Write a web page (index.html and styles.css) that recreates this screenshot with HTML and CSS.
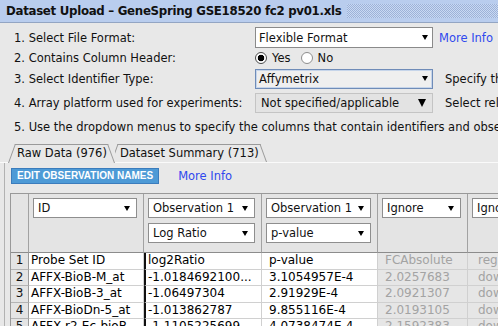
FILE: index.html
```html
<!DOCTYPE html>
<html lang="en">
<head>
    <meta charset="UTF-8">
    <meta name="viewport" content="width=device-width, initial-scale=1.0">
    <title>Dataset Upload</title>
    <link rel="stylesheet" href="styles.css">
</head>
<body>
    <div class="titlebar">
        <span class="title">Dataset Upload &ndash; GeneSpring GSE18520 fc2 pv01.xls</span>
        <span class="grip"></span>
    </div>

    <div class="steps">
        <span>1. Select File Format:</span>
        <div class="combo"><span>Flexible Format</span><i class="arrow"></i></div>
        <a class="link">More Info</a>

        <span>2. Contains Column Header:</span>
        <div class="radios">
            <span class="radio on"></span><span class="radio-label">Yes</span>
            <span class="radio"></span><span class="radio-label">No</span>
        </div>
        <span></span>

        <span>3. Select Identifier Type:</span>
        <div class="combo combo-focus"><span>Affymetrix</span><i class="arrow"></i></div>
        <span class="hint">Specify the type of identifier used in the file</span>

        <span>4. Array platform used for experiments:</span>
        <div class="combo combo-off"><span>Not specified/applicable</span><i class="arrow arrow-big"></i></div>
        <span class="hint">Select relevant array platform</span>

        <span class="step-wide">5. Use the dropdown menus to specify the columns that contain identifiers and observations</span>
    </div>

    <div class="tabs">
        <span class="tab active">Raw Data (976)</span>
        <span class="tab">Dataset Summary (713)</span>
    </div>

    <div class="pane">
        <div class="toolbar">
            <span class="button">EDIT OBSERVATION NAMES</span>
            <a class="link">More Info</a>
        </div>

        <div class="grid">
            <div class="hcell corner"></div>
            <div class="hcell">
                <div class="combo combo-sm"><span>ID</span><i class="arrow"></i></div>
            </div>
            <div class="hcell">
                <div class="combo combo-sm"><span>Observation 1</span><i class="arrow"></i></div>
                <div class="combo combo-sm"><span>Log Ratio</span><i class="arrow"></i></div>
            </div>
            <div class="hcell">
                <div class="combo combo-sm"><span>Observation 1</span><i class="arrow"></i></div>
                <div class="combo combo-sm"><span>p-value</span><i class="arrow"></i></div>
            </div>
            <div class="hcell">
                <div class="combo combo-sm"><span>Ignore</span><i class="arrow"></i></div>
            </div>
            <div class="hcell">
                <div class="combo combo-sm"><span>Ignore</span><i class="arrow"></i></div>
            </div>

            <div class="num">1</div>
            <div class="cell">Probe Set ID</div>
            <div class="cell bar">log2Ratio</div>
            <div class="cell pad">p-value</div>
            <div class="cell dim">FCAbsolute</div>
            <div class="cell dim last">regulation</div>

            <div class="num">2</div>
            <div class="cell">AFFX-BioB-M_at</div>
            <div class="cell bar">-1.0184692100...</div>
            <div class="cell pad">3.1054957E-4</div>
            <div class="cell dim">2.0257683</div>
            <div class="cell dim last">down</div>

            <div class="num">3</div>
            <div class="cell">AFFX-BioB-3_at</div>
            <div class="cell bar">-1.06497304</div>
            <div class="cell pad">2.91929E-4</div>
            <div class="cell dim">2.0921307</div>
            <div class="cell dim last">down</div>

            <div class="num">4</div>
            <div class="cell">AFFX-BioDn-5_at</div>
            <div class="cell bar">-1.013862787</div>
            <div class="cell pad">9.855116E-4</div>
            <div class="cell dim">2.0193105</div>
            <div class="cell dim last">down</div>

            <div class="num">5</div>
            <div class="cell">AFFX-r2-Ec-bioB...</div>
            <div class="cell bar">-1.1105225699</div>
            <div class="cell pad">4.0738474E-4</div>
            <div class="cell dim">2.1592383</div>
            <div class="cell dim last">down</div>
        </div>
    </div>
</body>
</html>
```

FILE: styles.css
```css
body {
    margin: 0;
    width: 498px;
    height: 326px;
    overflow: hidden;
    background: #e8e8e8;
    font-family: "DejaVu Sans", sans-serif;
    font-size: 11.5px;
    color: #111;
    white-space: nowrap;
}

.titlebar {
    display: flex;
    align-items: center;
    height: 22px;
    padding-left: 6px;
    background: #b9cdee;
    border-bottom: 1px solid #93a5c3;
}

.title {
    font-weight: bold;
    font-size: 11.8px;
    letter-spacing: -0.3px;
}

.grip {
    flex: 1;
    align-self: stretch;
    margin: 4px 0 4px 6px;
    background-image: repeating-conic-gradient(#9db2d8 0 25%, #c9d9f3 0 50%);
    background-size: 2px 2px;
}

.steps {
    display: grid;
    grid-template-columns: 241px 178px auto;
    grid-template-rows: 21px 20px 21px 27px 22px;
    align-items: center;
    padding: 4px 0 0 14px;
}

.step-wide {
    grid-column: 1 / -1;
}

.combo {
    display: flex;
    align-items: center;
    justify-content: space-between;
    box-sizing: border-box;
    height: 21px;
    padding: 0 4px 0 3px;
    border: 1px solid #8a8a8a;
    background: #fff;
    overflow: hidden;
}

.combo-focus {
    height: 20px;
    background: #efefef;
    border-color: #6f8cb8;
    box-shadow: inset 0 0 0 1px #c6d5ea;
}

.combo-off {
    height: 20px;
    padding-left: 5px;
    padding-right: 6px;
    background: #e3e3e3;
    border-color: #c4c4c4;
}

.arrow {
    width: 0;
    height: 0;
    border-left: 3.5px solid transparent;
    border-right: 3.5px solid transparent;
    border-top: 5px solid #000;
}

.arrow-big {
    border-left-width: 4.5px;
    border-right-width: 4.5px;
    border-top-width: 8px;
}

.link {
    margin-left: 6px;
    color: #2f49ee;
}

.hint {
    margin-left: 12px;
}

.radios {
    display: flex;
    align-items: center;
}

.radio {
    box-sizing: border-box;
    width: 12px;
    height: 12px;
    border-radius: 50%;
    border: 1px solid #8e8e8e;
    background: #fff;
}

.radio.on {
    border-color: #4a4a4a;
    background: radial-gradient(circle, #000 0 3px, #fff 3.6px);
}

.radio-label {
    margin: 0 10px 0 5px;
}

.tabs {
    display: flex;
    height: 18px;
    margin-top: 6px;
    padding-left: 8px;
    border-bottom: 1px solid #fafafa;
}

.tab {
    position: relative;
    padding: 0 9px;
    line-height: 18px;
}

.tab::before,
.tab::after {
    content: '';
    position: absolute;
    top: 0;
    bottom: 0;
    width: 55%;
    border-top: 1px solid #9a9a9a;
    transform-origin: bottom;
}

.tab::before {
    left: 0;
    border-left: 1px solid #9a9a9a;
    transform: skewX(-20deg);
}

.tab::after {
    right: 0;
    border-right: 1px solid #9a9a9a;
    transform: skewX(20deg);
}

.tab.active {
    z-index: 1;
    height: 19px;
    background: #e8e8e8;
    padding-right: 8px;
}

.tab + .tab {
    margin-left: -4px;
}

.pane {
    margin-left: 4px;
    padding: 5px 0 0 5px;
    border-left: 1px solid #b2b2b2;
}

.toolbar {
    display: flex;
    align-items: center;
    gap: 13px;
    height: 16px;
    margin-left: 1px;
}

.button {
    box-sizing: border-box;
    height: 16px;
    padding: 0 5px;
    background: #4d9ad6;
    border: 1px solid #3b7cbc;
    color: #fff;
    font-family: "Liberation Sans", sans-serif;
    font-weight: bold;
    font-size: 10px;
    line-height: 14px;
}

.grid {
    display: grid;
    grid-template-columns: 18px 115px 118px 116px 90px 200px;
    margin-top: 9px;
    border-top: 1px solid #999;
    border-left: 1px solid #999;
}

.hcell {
    display: flex;
    flex-direction: column;
    gap: 5px;
    box-sizing: border-box;
    height: 59px;
    padding: 4px 6px 0 4px;
    background: #e4e4e4;
    border-right: 1px solid #a2a2a2;
    border-bottom: 1px solid #8c8c8c;
}

.combo-sm {
    flex: none;
    height: 20px;
    padding-left: 4px;
    padding-right: 6px;
    border-color: #8e8e8e;
}

.num,
.cell {
    box-sizing: border-box;
    height: 16.5px;
    line-height: 15px;
    font-size: 12px;
    overflow: hidden;
}

.num {
    text-align: center;
    background: #e4e4e4;
    border-right: 1px solid #9a9a9a;
    border-bottom: 1px solid #b4b4b4;
}

.cell {
    padding-left: 2px;
    background: #fff;
    color: #000;
    border-right: 1px solid #d0d0d0;
    border-bottom: 1px solid #d0d0d0;
}

.cell.bar {
    border-left: 2px solid #111;
}

.cell.pad {
    padding-left: 7px;
}

.cell.dim {
    padding-left: 7px;
    background: #e6e6e6;
    color: #a3a3a3;
}

.cell.last {
    padding-left: 10px;
}
```
